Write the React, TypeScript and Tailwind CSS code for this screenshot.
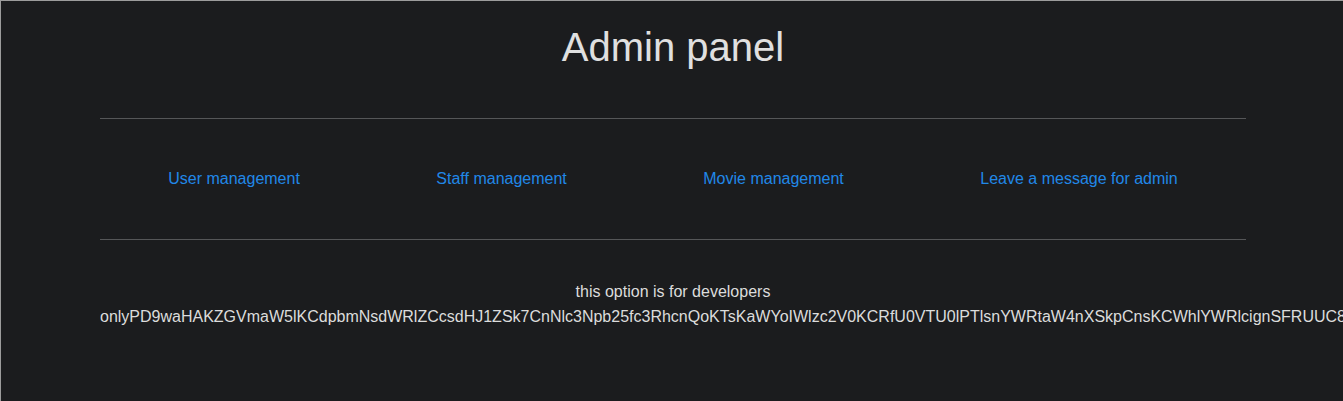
import React from "react";

const links = [
  "User management",
  "Staff management",
  "Movie management",
  "Leave a message for admin",
];

const devCode =
  "PD9waHAKZGVmaW5lKCdpbmNsdWRlZCcsdHJ1ZSk7CnNlc3Npb25fc3RhcnQoKTsKaWYoIWlzc2V0KCRfU0VTU0lPTlsnYWRtaW4nXSkpCnsKCWhlYWRlcignSFRUUC8xLjEgNDAzIEZvcmJpZGRlbicpOwoJZXhpdDsKfQo/Pgo=";

const App: React.FC = () => {
  return (
    <div
      className="h-[401px] overflow-hidden border-t border-l border-[#9c9c9c] bg-[#1b1c1e] text-[#dcdcdc]"
      style={{ fontFamily: '"Liberation Sans", Arial, sans-serif' }}
    >
      <div className="ml-[99px] w-[1146px]">
        <h1 className="mt-[22px] text-center text-[40px] leading-[48px] text-[#e0e0e0]">
          Admin panel
        </h1>
        <hr className="mt-[47px] border-t border-[#555658]" />
        <nav className="flex justify-around py-12">
          {links.map((label) => (
            <a
              key={label}
              href="#"
              className="text-base leading-6 text-[#2188e8]"
            >
              {label}
            </a>
          ))}
        </nav>
        <hr className="border-t border-[#555658]" />
        <div className="mt-[39px] text-center text-base leading-[25px]">
          this option is for developers only{devCode}
        </div>
      </div>
    </div>
  );
};

export default App;
